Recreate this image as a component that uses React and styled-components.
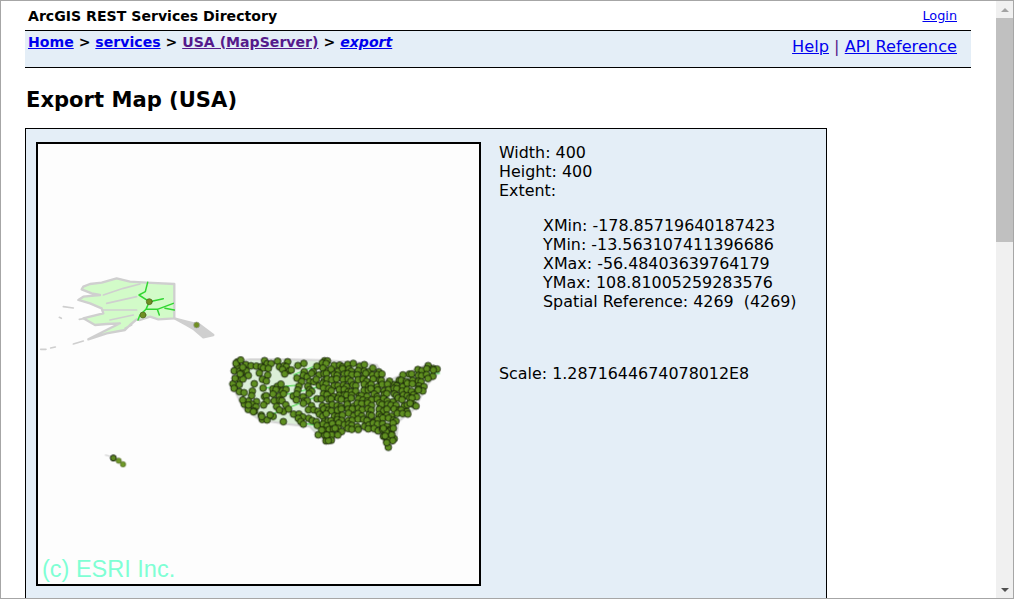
import React from 'react';
import styled, { createGlobalStyle } from 'styled-components';

const GlobalStyle = createGlobalStyle`
  html, body {
    margin: 0;
    height: 100%;
    overflow: hidden;
    background: #fff;
  }
  body {
    font-family: "DejaVu Sans", Verdana, sans-serif;
    color: #000;
  }
  a { color: #0000ee; }
`;

const Window = styled.div`
  display: flex;
  width: 1014px;
  height: 599px;
  box-sizing: border-box;
  border: 1px solid #a6a6a6;
  overflow: hidden;
`;

const Page = styled.div`
  flex: 1;
  min-width: 0;
  padding: 0 25px 0 24px;
  overflow: hidden;
`;

const TitleRow = styled.div`
  display: flex;
  justify-content: space-between;
  align-items: center;
  height: 29px;
  padding: 0 14px 0 3px;
`;

const Title = styled.div`
  font-size: 14.1px;
  font-weight: bold;
`;

const Login = styled.a`
  font-size: 12.8px;
`;

const NavBar = styled.div`
  display: flex;
  justify-content: space-between;
  height: 36px;
  padding: 0 14px 0 3px;
  background: #e4eef7;
  border-top: 1px solid #000;
  border-bottom: 1px solid #000;
`;

const Crumbs = styled.div`
  font-size: 14.1px;
  font-weight: bold;
  line-height: 22px;
`;

const CrumbLink = styled.a`
  color: ${p => (p.$visited ? '#551a8b' : '#0000ee')};
  font-style: ${p => (p.$current ? 'italic' : 'normal')};
`;

const NavLinks = styled.div`
  font-size: 16.2px;
  line-height: 19px;
  padding-top: 6px;
  color: #551a8b;
`;

const Heading = styled.h1`
  margin: 19px 0 15px 1px;
  font-size: 21.1px;
  line-height: 26px;
  font-weight: bold;
`;

const Panel = styled.div`
  display: flex;
  box-sizing: border-box;
  width: 802px;
  height: 480px;
  padding: 13px 0 0 10px;
  background: #e4eef7;
  border: 1px solid #000;
`;

const MapFrame = styled.div`
  flex: none;
  width: 441px;
  height: 440px;
  border: 2px solid #000;
  background: #fdfdfd;
`;

const MapSvg = styled.svg`
  display: block;
  width: 441px;
  height: 440px;
`;

const Info = styled.div`
  margin-left: 18px;
  padding-top: 1px;
  font-size: 15.9px;
  line-height: 19px;
  white-space: nowrap;
`;

const Extent = styled.div`
  margin: 16px 0 0 44px;
`;

const Scale = styled.div`
  margin-top: 53px;
`;

const Scrollbar = styled.div`
  flex: none;
  display: flex;
  flex-direction: column;
  align-items: center;
  width: 17px;
  background: #f0f0f0;
`;

const ArrowBox = styled.div`
  flex: none;
  display: flex;
  align-items: center;
  justify-content: center;
  width: 17px;
  height: 17px;
`;

const Arrow = styled.div`
  width: 0;
  height: 0;
  border-left: 4px solid transparent;
  border-right: 4px solid transparent;
  border-${p => (p.$down ? 'top' : 'bottom')}: 4px solid ${p => (p.$down ? '#505050' : '#a3a3a3')};
`;

const Thumb = styled.div`
  flex: none;
  width: 17px;
  height: 224px;
  background: #c0c0c0;
`;

const ScrollSpace = styled.div`
  flex: 1;
`;

// zoom-crop coordinates, scaled down by the group transforms below
const usOutline = [
  [40, 35], [90, 28], [200, 28], [300, 30], [420, 38], [470, 45], [485, 70], [505, 92],
  [560, 68], [620, 45], [650, 50], [655, 70], [625, 100], [610, 125], [585, 175], [535, 215],
  [528, 270], [505, 295], [485, 255], [440, 240], [370, 242], [330, 280], [300, 262],
  [270, 230], [200, 222], [120, 210], [70, 175], [38, 110],
];

const inside = (x, y, poly) => {
  let hit = false;
  for (let i = 0, j = poly.length - 1; i < poly.length; j = i++) {
    const [xi, yi] = poly[i];
    const [xj, yj] = poly[j];
    if (yi > y !== yj > y && x < ((xj - xi) * (y - yi)) / (yj - yi) + xi) hit = !hit;
  }
  return hit;
};

const buildDots = () => {
  let seed = 1234;
  const rand = () => {
    seed = (seed * 16807) % 2147483647;
    return seed / 2147483647;
  };
  const dots = [];
  // jittered grid, so the east fills up solid and the west stays open
  for (let y = 30; y < 298; y += 15) {
    for (let x = 38; x < 660; x += 15) {
      const px = x + (rand() - 0.5) * 12;
      const py = y + (rand() - 0.5) * 12;
      if (!inside(px, py, usOutline)) continue;
      if (px < 300 && rand() > 0.55) continue;
      dots.push([px, py]);
    }
  }
  const coast = [
    [48, 40], [62, 30], [68, 52], [45, 85], [60, 72], [42, 115], [58, 125], [72, 128], [68, 150],
    [85, 165], [100, 185], [125, 200], [150, 195], [178, 180], [190, 215], [505, 292], [325, 272],
    [498, 245], [505, 265], [515, 255], [495, 258], [518, 272], [500, 278], [520, 235], [490, 235],
    [305, 240], [320, 255], [345, 235], [570, 160], [595, 120], [640, 60],
  ];
  return [...dots, ...coast];
};

const dots = buildDots();

const MapImage = () => (
  <MapSvg viewBox="0 0 441 440">
    <defs>
      <filter id="soft" x="-5%" y="-5%" width="110%" height="110%">
        <feGaussianBlur stdDeviation="0.4" />
      </filter>
    </defs>
    <g filter="url(#soft)">
      <g transform="translate(2 116) scale(0.3333)" fill="none" strokeLinejoin="round" strokeLinecap="round">
        <path d="M403 175L440 185L480 195L520 225L490 232L462 208L440 195Z" fill="#cfcfcf" stroke="#cfcfcf" strokeWidth="7" />
        <path
          d="M130 80L150 72L185 68L230 55L270 65L320 68L403 72L403 175L355 178L330 170L300 180L290 178L270 195L255 210L200 220L145 238L170 225L210 205L240 190L200 192L165 195L130 175L150 170L190 160L185 145L150 130L115 120L130 110L180 105L155 100L125 88Z"
          fill="#d2fbc8"
          stroke="#cfcfcf"
          strokeWidth="7"
        />
        <path d="M190 105L250 85L300 72M200 130L290 110M190 150L290 150M210 180L280 165M255 205L275 195" stroke="#cfcfcf" strokeWidth="5" />
        <path d="M70 140L100 144M118 178L135 175M100 252L130 243M2 268L18 268M32 264L46 261M58 172L64 175" stroke="#cfcfcf" strokeWidth="5" />
        <path
          d="M323 67L316 95L297 105L328 125L370 116M328 125L318 148L300 165L294 180M318 148L352 148L358 165M352 148L400 130M375 145L403 150"
          stroke="#33d633"
          strokeWidth="4.5"
        />
        <circle cx="328" cy="125" r="9" fill="#6f8f22" stroke="#4c5f20" strokeWidth="2" />
        <circle cx="309" cy="165" r="9" fill="#6f8f22" stroke="#4c5f20" strokeWidth="2" />
        <circle cx="470" cy="195" r="9" fill="#6f8f22" stroke="#a0a0a0" strokeWidth="2" />
      </g>
      <g transform="translate(182 206) scale(0.3333)">
        <polygon points={usOutline.map(p => p.join(',')).join(' ')} fill="#dcefd8" stroke="#d4d4d4" strokeWidth="6" />
        <path d="M90 40L130 45M220 75L280 50M120 115L240 105M170 140L300 110M150 195L290 140M250 220L305 228M620 70L660 70" stroke="#33d633" strokeWidth="3" fill="none" />
        {dots.map(([x, y], i) => (
          <circle key={i} cx={x} cy={y} r="10" fill="#5f8f20" stroke="#0c1405" strokeWidth="2.4" />
        ))}
      </g>
      <g transform="translate(-18 296) scale(0.3333)">
        <path d="M255 45L275 50" stroke="#d4d4d4" strokeWidth="4" />
        <circle cx="280" cy="54" r="9" fill="#5f8a20" stroke="#10180a" strokeWidth="3" />
        <circle cx="296" cy="62" r="8" fill="#6f9a28" stroke="#4c5f20" strokeWidth="2" />
        <circle cx="309" cy="73" r="8" fill="#6f9a28" stroke="#4c5f20" strokeWidth="2" />
      </g>
    </g>
    <text x="4" y="433" fontFamily="'Liberation Sans', Arial, sans-serif" fontSize="23.5" fill="#7fffd4">
      (c) ESRI Inc.
    </text>
  </MapSvg>
);

const App = () => (
  <>
    <GlobalStyle />
    <Window>
      <Page>
        <TitleRow>
          <Title>ArcGIS REST Services Directory</Title>
          <Login href="#">Login</Login>
        </TitleRow>
        <NavBar>
          <Crumbs>
            <CrumbLink href="#">Home</CrumbLink> &gt; <CrumbLink href="#">services</CrumbLink> &gt;{' '}
            <CrumbLink href="#" $visited>USA (MapServer)</CrumbLink> &gt;{' '}
            <CrumbLink href="#" $current>export</CrumbLink>
          </Crumbs>
          <NavLinks>
            <a href="#">Help</a> | <a href="#">API Reference</a>
          </NavLinks>
        </NavBar>
        <Heading>Export Map (USA)</Heading>
        <Panel>
          <MapFrame>
            <MapImage />
          </MapFrame>
          <Info>
            <div>Width: 400</div>
            <div>Height: 400</div>
            <div>Extent:</div>
            <Extent>
              <div>XMin: -178.85719640187423</div>
              <div>YMin: -13.563107411396686</div>
              <div>XMax: -56.48403639764179</div>
              <div>YMax: 108.81005259283576</div>
              <div>Spatial Reference: 4269&nbsp; (4269)</div>
            </Extent>
            <Scale>Scale: 1.2871644674078012E8</Scale>
          </Info>
        </Panel>
      </Page>
      <Scrollbar>
        <ArrowBox><Arrow /></ArrowBox>
        <Thumb />
        <ScrollSpace />
        <ArrowBox><Arrow $down /></ArrowBox>
      </Scrollbar>
    </Window>
  </>
);

export default App;
